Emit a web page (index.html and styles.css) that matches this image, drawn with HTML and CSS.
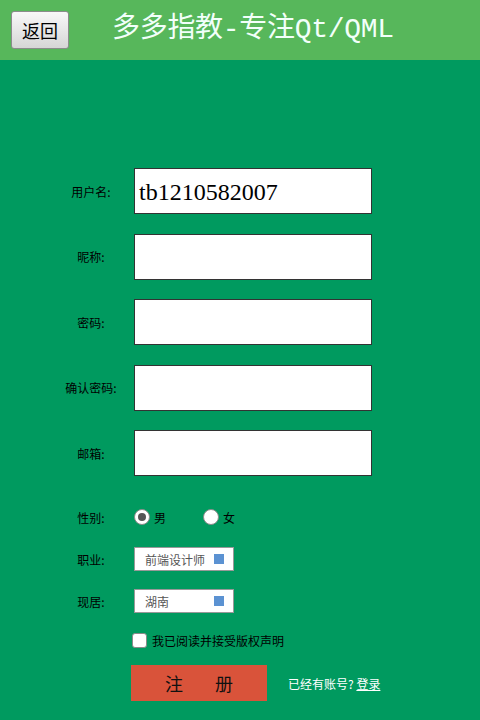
FILE: index.html
```html
<!DOCTYPE html>
<html lang="zh-CN">
<head>
<meta charset="utf-8">
<title>注册</title>
<link rel="stylesheet" href="styles.css">
</head>
<body>
<div class="app">
  <header class="topbar">
    <button class="back-btn">返回</button>
    <h1 class="title">多多指教-专注Qt/QML</h1>
  </header>
  <main class="form">
    <div class="field-row">
      <span class="label">用户名:</span>
      <div class="text-input"><span class="value">tb1210582007</span></div>
    </div>
    <div class="field-row">
      <span class="label">昵称:</span>
      <div class="text-input"></div>
    </div>
    <div class="field-row">
      <span class="label">密码:</span>
      <div class="text-input"></div>
    </div>
    <div class="field-row">
      <span class="label">确认密码:</span>
      <div class="text-input"></div>
    </div>
    <div class="field-row">
      <span class="label">邮箱:</span>
      <div class="text-input"></div>
    </div>

    <div class="small-row gender-row">
      <span class="label">性别:</span>
      <div class="radios">
        <span class="radio-item"><span class="radio checked"></span><span class="radio-text">男</span></span>
        <span class="radio-item"><span class="radio"></span><span class="radio-text">女</span></span>
      </div>
    </div>
    <div class="small-row job-row">
      <span class="label">职业:</span>
      <div class="combo"><span class="combo-text">前端设计师</span><span class="combo-mark"></span></div>
    </div>
    <div class="small-row city-row">
      <span class="label">现居:</span>
      <div class="combo"><span class="combo-text">湖南</span><span class="combo-mark"></span></div>
    </div>
    <div class="small-row agree-row">
      <span class="label"></span>
      <div class="agree"><span class="checkbox"></span><span class="agree-text">我已阅读并接受版权声明</span></div>
    </div>
    <div class="submit-row">
      <span class="label"></span>
      <button class="register-btn"><span>注</span><span>册</span></button>
      <span class="login-hint">已经有账号? <a class="login-link">登录</a></span>
    </div>
  </main>
</div>
</body>
</html>
```
FILE: styles.css
```css
html, body {
  margin: 0;
  padding: 0;
}
body {
  width: 480px;
  height: 720px;
  overflow: hidden;
  background: #009a5f;
  font-family: "Noto Sans CJK SC", "Liberation Sans", sans-serif;
}
.app {
  display: flex;
  flex-direction: column;
  height: 720px;
}
.topbar {
  height: 60px;
  background: #57b75b;
  display: flex;
  align-items: center;
  padding-left: 11px;
  box-sizing: border-box;
}
.back-btn {
  width: 58px;
  height: 38px;
  margin: 0;
  padding: 0;
  border: 1px solid #8c8c8c;
  border-radius: 3px;
  background: linear-gradient(#f8f8f8, #e6e6e6 55%, #d6d6d6);
  font-family: "Noto Sans CJK SC", sans-serif;
  font-size: 18px;
  color: #000;
  line-height: 36px;
  margin-bottom: 1px;
}
.title {
  margin: 0 0 0 43px;
  font-family: "Liberation Mono", "Noto Sans CJK SC", monospace;
  font-weight: normal;
  font-size: 28px;
  color: #f2fffa;
  line-height: 36px;
  letter-spacing: -0.3px;
}
.form {
  display: flex;
  flex-direction: column;
  padding-top: 108px;
}
.field-row {
  display: flex;
  align-items: center;
  height: 46px;
  margin-bottom: 19.5px;
}
.label {
  width: 82px;
  margin-left: 50px;
  margin-right: 2px;
  text-align: center;
  font-size: 12px;
  color: #000;
  flex: none;
}
.text-input {
  width: 238px;
  height: 46px;
  box-sizing: border-box;
  border: 1px solid #333;
  background: #fff;
  display: flex;
  align-items: center;
  padding-left: 4px;
}
.value {
  font-family: "Liberation Serif", serif;
  font-size: 24px;
  color: #000;
  margin-top: 2px;
}
.small-row {
  display: flex;
  align-items: center;
  height: 24px;
}
.gender-row {
  margin-top: 9.5px;
}
.job-row {
  margin-top: 18px;
}
.city-row {
  margin-top: 18px;
}
.agree-row {
  margin-top: 15px;
}
.radios {
  display: flex;
  align-items: center;
}
.radio-item {
  display: flex;
  align-items: center;
  width: 69px;
}
.radio {
  width: 16px;
  height: 16px;
  box-sizing: border-box;
  border: 1px solid #8a8a8a;
  border-radius: 50%;
  background: #fff;
  display: flex;
  align-items: center;
  justify-content: center;
  margin-right: 4px;
}
.radio.checked::after {
  content: "";
  width: 8px;
  height: 8px;
  border-radius: 50%;
  background: #555;
}
.radio-text {
  font-size: 12px;
  color: #000;
}
.combo {
  width: 100px;
  height: 24px;
  box-sizing: border-box;
  border: 1px solid #999;
  background: #fff;
  display: flex;
  align-items: center;
  justify-content: space-between;
  padding: 0 9px 0 10px;
}
.combo-text {
  font-size: 12px;
  color: #555;
}
.combo-mark {
  width: 10px;
  height: 10px;
  background: #5b92d2;
}
.agree {
  display: flex;
  align-items: center;
}
.checkbox {
  width: 15px;
  height: 15px;
  box-sizing: border-box;
  border: 1px solid #8a8a8a;
  border-radius: 3px;
  background: #fff;
  margin-right: 5px;
  margin-left: -2px;
}
.agree-text {
  font-size: 12px;
  color: #000;
}
.submit-row {
  display: flex;
  align-items: center;
  margin-top: 13px;
  height: 36px;
}
.submit-row .label {
  margin-right: 0;
  width: 81px;
}
.register-btn {
  width: 136px;
  height: 36px;
  margin: 0;
  padding: 0;
  border: none;
  background: #d9533a;
  display: flex;
  align-items: center;
  justify-content: center;
  gap: 32px;
  font-family: "Noto Sans CJK SC", sans-serif;
  font-size: 18px;
  color: #111;
}
.login-hint {
  margin-left: 21px;
  font-size: 12px;
  color: #fff;
}
.login-link {
  color: #fff;
  text-decoration: underline;
}
```
